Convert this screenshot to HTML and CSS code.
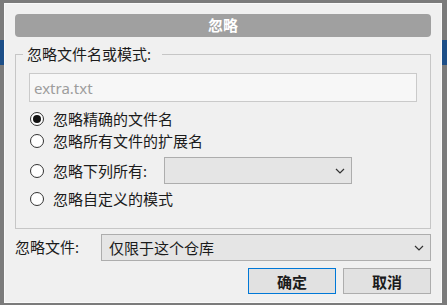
FILE: index.html
```html
<!DOCTYPE html>
<html lang="zh-CN">

<head>
    <meta charset="UTF-8">
    <meta name="viewport" content="width=device-width, initial-scale=1.0">
    <title>忽略</title>
    <link rel="stylesheet" href="styles.css">
</head>

<body>
    <div class="dialog">
        <div class="title">忽略</div>

        <fieldset class="group">
            <legend>忽略文件名或模式:</legend>
            <input type="text" class="pattern" placeholder="extra.txt">

            <div class="option">
                <span class="radio checked"></span>
                <span class="label">忽略精确的文件名</span>
            </div>
            <div class="option">
                <span class="radio"></span>
                <span class="label">忽略所有文件的扩展名</span>
            </div>
            <div class="option option-combo">
                <span class="radio"></span>
                <span class="label label-fixed">忽略下列所有:</span>
                <div class="combo small">
                    <span class="combo-text"></span>
                    <svg class="chevron" width="10" height="6" viewBox="0 0 10 6"><path d="M1 1l4 4 4-4" fill="none" stroke="#333" stroke-width="1.2"/></svg>
                </div>
            </div>
            <div class="option option-last">
                <span class="radio"></span>
                <span class="label">忽略自定义的模式</span>
            </div>
        </fieldset>

        <div class="scope">
            <span class="scope-label">忽略文件:</span>
            <div class="combo wide">
                <span class="combo-text">仅限于这个仓库</span>
                <svg class="chevron" width="10" height="6" viewBox="0 0 10 6"><path d="M1 1l4 4 4-4" fill="none" stroke="#333" stroke-width="1.2"/></svg>
            </div>
        </div>

        <div class="actions">
            <button type="button" class="btn default">确定</button>
            <button type="button" class="btn">取消</button>
        </div>
    </div>
</body>

</html>
```

FILE: styles.css
```css
body {
    margin: 0;
    width: 447px;
    height: 305px;
    overflow: hidden;
    background: linear-gradient(#7b7b7b 0 40px, #1d4f88 40px 65px, #7b7b7b 65px);
    font-family: "Noto Sans", "Noto Sans CJK SC", sans-serif;
    font-size: 15px;
    color: #1b1b1b;
}

.dialog {
    box-sizing: border-box;
    margin: 3px 0 0 4px;
    width: 438px;
    height: 300px;
    padding: 10px 10px 0 10px;
    background-color: #f0f0f0;
    border: 1px solid #f9f9f9;
}

.title {
    height: 23px;
    line-height: 23px;
    border-radius: 4px;
    background-color: #a0a0a0;
    color: #fff;
    font-weight: bold;
    text-align: center;
}

.group {
    margin: 7px 0 0 0;
    padding: 9px 13px 18px 13px;
    border: 1px solid #c6c6c6;
    min-width: 0;
}

.group legend {
    margin-left: -6px;
    padding: 0 11px 0 4px;
    height: 20px;
    line-height: 20px;
}

.pattern {
    display: block;
    box-sizing: border-box;
    width: 100%;
    height: 29px;
    margin: 0 0 6px 0;
    padding: 0 4px;
    border: 1px solid #cacaca;
    background-color: #f7f7f7;
    font-family: "Noto Sans", "Noto Sans CJK SC", sans-serif;
    font-size: 15px;
    outline: none;
}

.pattern::placeholder {
    color: #9d9d9d;
}

.option {
    display: flex;
    align-items: center;
    height: 22px;
    padding-left: 1px;
}

.option-combo {
    height: 27px;
    margin-top: 5px;
}

.option-last {
    margin-top: 4px;
}

.radio {
    box-sizing: border-box;
    width: 14px;
    height: 14px;
    border: 1px solid #333;
    border-radius: 50%;
    background-color: #fff;
    display: flex;
    align-items: center;
    justify-content: center;
    flex: none;
}

.radio.checked::after {
    content: "";
    width: 8px;
    height: 8px;
    border-radius: 50%;
    background-color: #111;
}

.label {
    margin-left: 9px;
    line-height: 22px;
    white-space: nowrap;
}

.label-fixed {
    width: 111px;
}

.combo {
    box-sizing: border-box;
    height: 27px;
    display: flex;
    align-items: center;
    justify-content: space-between;
    padding: 0 6px 0 7px;
    border: 1px solid #adadad;
    background-color: #e5e5e5;
}

.combo.small {
    width: 188px;
}

.combo.wide {
    flex: 1;
}

.combo-text {
    white-space: nowrap;
}

.scope {
    display: flex;
    align-items: center;
    margin-top: 5px;
}

.scope-label {
    width: 86px;
    line-height: 27px;
}

.actions {
    display: flex;
    justify-content: flex-end;
    gap: 7px;
    margin-top: 7px;
}

.btn {
    box-sizing: border-box;
    width: 88px;
    height: 26px;
    padding: 0;
    border: 1px solid #adadad;
    background-color: #e1e1e1;
    font-family: "Noto Sans", "Noto Sans CJK SC", sans-serif;
    font-size: 15px;
    font-weight: bold;
    color: #1b1b1b;
    cursor: pointer;
}

.btn.default {
    border-color: #0078d7;
}
```
